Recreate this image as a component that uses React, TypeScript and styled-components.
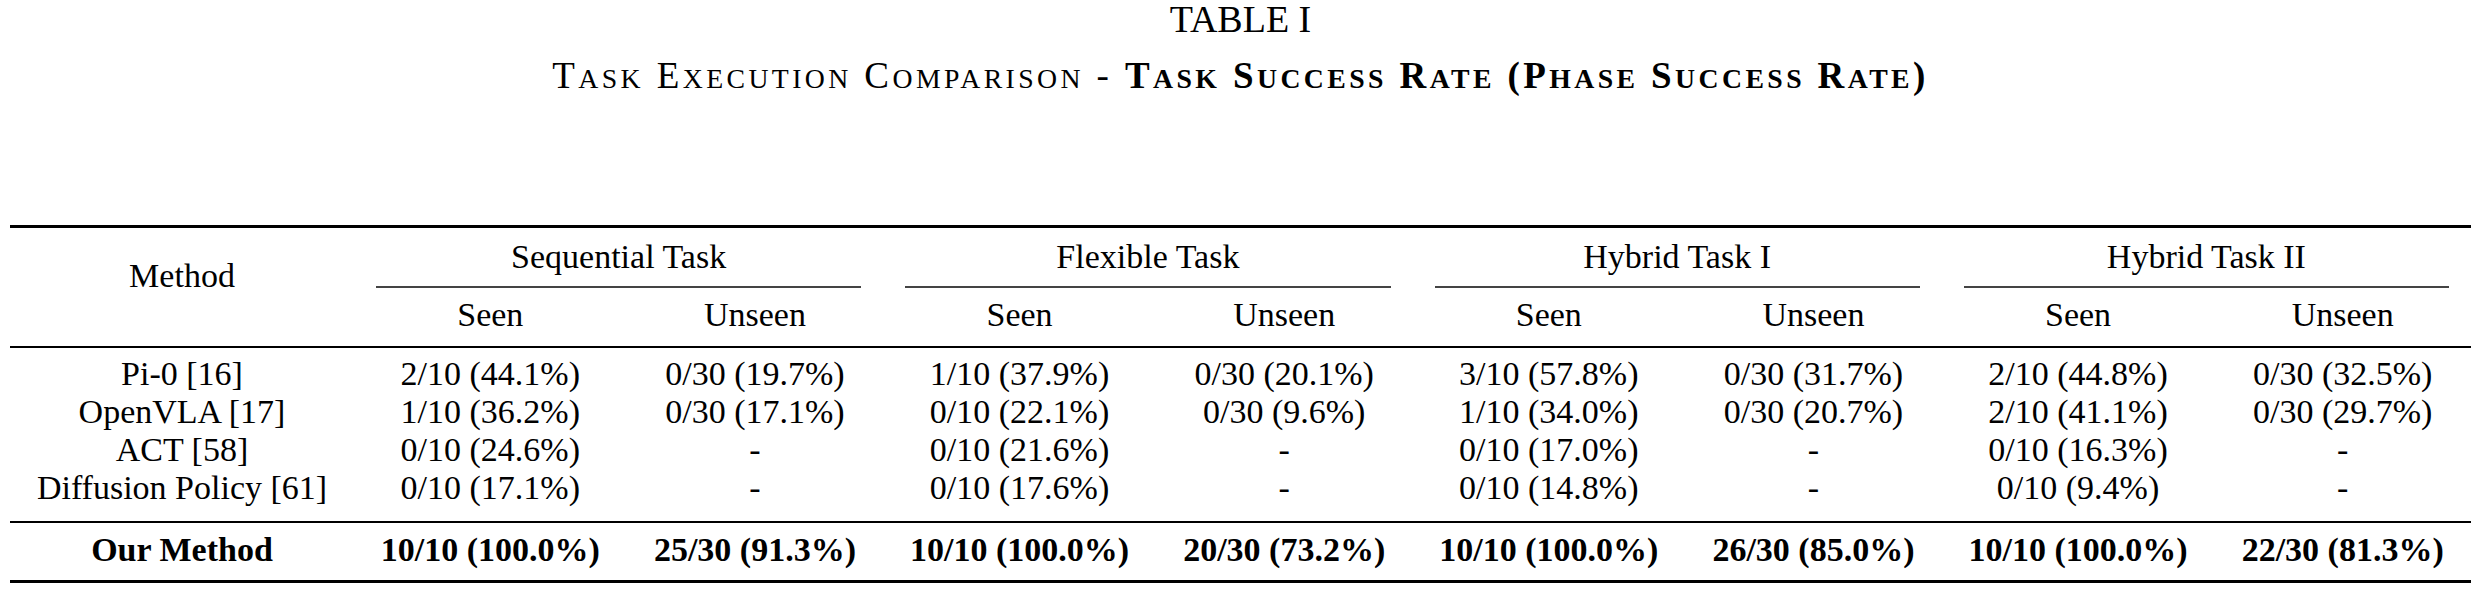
import React from "react";
import styled, { createGlobalStyle } from "styled-components";

const Global = createGlobalStyle`
  html, body { margin: 0; padding: 0; background: #fff; }
  body { font-family: "Liberation Serif", "Times New Roman", serif; color: #000; }
`;

const Page = styled.div`
  width: 2461px;
  padding-left: 10px;
`;

const Caption = styled.div`
  text-align: center;
`;

const TableLabel = styled.div`
  font-size: 38px;
  line-height: 38px;
`;

const TableTitle = styled.div`
  font-size: 37px;
  line-height: 37px;
  margin-top: 19px;
  letter-spacing: 3.4px;
  white-space: pre;
`;

const Small = styled.span`
  font-size: 0.75em;
`;

const Strong = styled.span`
  font-weight: 700;
`;

const Table = styled.div`
  margin-top: 128px;
  border-top: 3px solid #000;
  border-bottom: 3px solid #000;
  font-size: 34px;
`;

const Header = styled.div`
  display: flex;
  border-bottom: 2px solid #000;
`;

const MethodHead = styled.div`
  width: 344px;
  flex: none;
  display: flex;
  align-items: center;
  justify-content: center;
  padding-bottom: 23px;
  line-height: 38px;
`;

const Group = styled.div`
  flex: 1;
  display: flex;
  flex-direction: column;
`;

const GroupTitle = styled.div`
  height: 58px;
  line-height: 58px;
  text-align: center;
`;

const GroupRule = styled.div`
  height: 2px;
  background: #444;
  margin: 0 22px;
`;

const SubRow = styled.div`
  display: flex;
  height: 58px;
`;

const SubCell = styled.div`
  flex: 1;
  text-align: center;
  padding-left: 8px;
  line-height: 53px;
`;

const Body = styled.div<{ $last?: boolean }>`
  padding: ${(p) => (p.$last ? "0 0 4px" : "7px 0 13.5px")};
  border-bottom: ${(p) => (p.$last ? "none" : "2px solid #000")};
`;

const Row = styled.div<{ $bold?: boolean }>`
  display: flex;
  line-height: ${(p) => (p.$bold ? "53px" : "38px")};
  font-weight: ${(p) => (p.$bold ? 700 : 400)};
  white-space: nowrap;
`;

const MethodCell = styled.div`
  width: 344px;
  flex: none;
  text-align: center;
`;

const DataCell = styled.div`
  flex: 1;
  text-align: center;
  padding-left: 8px;
`;

function SmallCaps({ text }: { text: string }) {
  const parts: React.ReactNode[] = [];
  const re = /([a-z]+)|([^a-z]+)/g;
  let m: RegExpExecArray | null;
  let i = 0;
  while ((m = re.exec(text)) !== null) {
    if (m[1]) parts.push(<Small key={i++}>{m[1].toUpperCase()}</Small>);
    else parts.push(<React.Fragment key={i++}>{m[2]}</React.Fragment>);
  }
  return <>{parts}</>;
}

const groups = ["Sequential Task", "Flexible Task", "Hybrid Task I", "Hybrid Task II"];

const rows: { method: string; cells: string[] }[] = [
  {
    method: "Pi-0 [16]",
    cells: ["2/10 (44.1%)", "0/30 (19.7%)", "1/10 (37.9%)", "0/30 (20.1%)", "3/10 (57.8%)", "0/30 (31.7%)", "2/10 (44.8%)", "0/30 (32.5%)"],
  },
  {
    method: "OpenVLA [17]",
    cells: ["1/10 (36.2%)", "0/30 (17.1%)", "0/10 (22.1%)", "0/30 (9.6%)", "1/10 (34.0%)", "0/30 (20.7%)", "2/10 (41.1%)", "0/30 (29.7%)"],
  },
  {
    method: "ACT [58]",
    cells: ["0/10 (24.6%)", "-", "0/10 (21.6%)", "-", "0/10 (17.0%)", "-", "0/10 (16.3%)", "-"],
  },
  {
    method: "Diffusion Policy [61]",
    cells: ["0/10 (17.1%)", "-", "0/10 (17.6%)", "-", "0/10 (14.8%)", "-", "0/10 (9.4%)", "-"],
  },
];

const ours = {
  method: "Our Method",
  cells: ["10/10 (100.0%)", "25/30 (91.3%)", "10/10 (100.0%)", "20/30 (73.2%)", "10/10 (100.0%)", "26/30 (85.0%)", "10/10 (100.0%)", "22/30 (81.3%)"],
};

export default function App() {
  return (
    <>
      <Global />
      <Page>
        <Caption>
          <TableLabel>TABLE I</TableLabel>
          <TableTitle>
            <SmallCaps text="Task Execution Comparison - " />
            <Strong>
              <SmallCaps text="Task Success Rate (Phase Success Rate)" />
            </Strong>
          </TableTitle>
        </Caption>
        <Table>
          <Header>
            <MethodHead>Method</MethodHead>
            {groups.map((g) => (
              <Group key={g}>
                <GroupTitle>{g}</GroupTitle>
                <GroupRule />
                <SubRow>
                  <SubCell>Seen</SubCell>
                  <SubCell>Unseen</SubCell>
                </SubRow>
              </Group>
            ))}
          </Header>
          <Body>
            {rows.map((r) => (
              <Row key={r.method}>
                <MethodCell>{r.method}</MethodCell>
                {r.cells.map((c, i) => (
                  <DataCell key={i}>{c}</DataCell>
                ))}
              </Row>
            ))}
          </Body>
          <Body $last>
            <Row $bold>
              <MethodCell>{ours.method}</MethodCell>
              {ours.cells.map((c, i) => (
                <DataCell key={i}>{c}</DataCell>
              ))}
            </Row>
          </Body>
        </Table>
      </Page>
    </>
  );
}
